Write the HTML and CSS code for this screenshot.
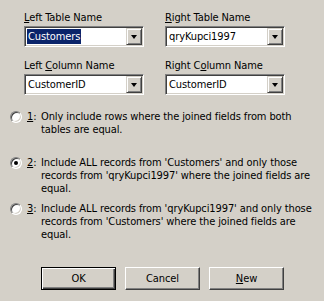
FILE: index.html
```html
<!DOCTYPE html>
<html>
<head>
<meta charset="utf-8">
<link rel="stylesheet" href="styles.css">
</head>
<body>
<div class="dialog">
  <div class="fields">
    <div class="field">
      <div class="label"><u>L</u>eft Table Name</div>
      <div class="combo"><div class="value"><span class="sel">Customers</span></div><div class="btn"><span class="arrow"></span></div></div>
    </div>
    <div class="field">
      <div class="label"><u>R</u>ight Table Name</div>
      <div class="combo"><div class="value">qryKupci1997</div><div class="btn"><span class="arrow"></span></div></div>
    </div>
    <div class="field">
      <div class="label">Left <u>C</u>olumn Name</div>
      <div class="combo"><div class="value">CustomerID</div><div class="btn"><span class="arrow"></span></div></div>
    </div>
    <div class="field">
      <div class="label">Right C<u>o</u>lumn Name</div>
      <div class="combo"><div class="value">CustomerID</div><div class="btn"><span class="arrow"></span></div></div>
    </div>
  </div>
  <div class="options">
    <div class="option">
      <span class="radio"></span>
      <span class="num"><u>1</u>:</span>
      <span class="text">Only include rows where the joined fields from both tables are equal.</span>
    </div>
    <div class="option">
      <span class="radio checked"></span>
      <span class="num"><u>2</u>:</span>
      <span class="text">Include ALL records from 'Customers' and only those records from 'qryKupci1997' where the joined fields are equal.</span>
    </div>
    <div class="option">
      <span class="radio"></span>
      <span class="num"><u>3</u>:</span>
      <span class="text">Include ALL records from 'qryKupci1997' and only those records from 'Customers' where the joined fields are equal.</span>
    </div>
  </div>
  <div class="buttons">
    <div class="button default"><span>OK</span></div>
    <div class="button"><span>Cancel</span></div>
    <div class="button"><span><u>N</u>ew</span></div>
  </div>
</div>
</body>
</html>
```
FILE: styles.css
```css
html, body {
  margin: 0;
  padding: 0;
  background: #d4d0c8;
}
body {
  width: 324px;
  height: 301px;
  overflow: hidden;
  font-family: "DejaVu Sans Condensed", "DejaVu Sans", sans-serif;
  font-size: 11px;
  letter-spacing: -0.1px;
  color: #000;
}
.dialog {
  padding-top: 11px;
}
.fields {
  display: grid;
  grid-template-columns: 120px 120px;
  column-gap: 21px;
  row-gap: 12px;
  padding-left: 24px;
}
.label {
  height: 13px;
  line-height: 13px;
  margin-bottom: 2px;
  white-space: nowrap;
}
.combo {
  box-sizing: border-box;
  height: 21px;
  display: flex;
  background: #fff;
  border: 1px solid;
  border-color: #808080 #fff #fff #808080;
  box-shadow: inset 1px 1px 0 #404040, inset -1px -1px 0 #d4d0c8;
  padding: 1px;
}
.value {
  flex: 1;
  padding-left: 2px;
  line-height: 17px;
  white-space: nowrap;
  overflow: hidden;
}
.sel {
  display: inline-block;
  background: #0a246a;
  color: #fff;
  margin-left: -1px;
  padding: 0 1px;
  line-height: 15px;
  margin-top: 1px;
  vertical-align: top;
}
.btn {
  box-sizing: border-box;
  width: 16px;
  height: 17px;
  background: #d4d0c8;
  border: 1px solid;
  border-color: #d4d0c8 #404040 #404040 #d4d0c8;
  box-shadow: inset 1px 1px 0 #fff, inset -1px -1px 0 #808080;
  display: flex;
  align-items: center;
  justify-content: center;
}
.arrow {
  width: 0;
  height: 0;
  border-left: 3.5px solid transparent;
  border-right: 3.5px solid transparent;
  border-top: 4px solid #000;
  margin-top: 1px;
}
.options {
  margin-top: 15px;
  padding-left: 10px;
  padding-right: 10px;
}
.option {
  display: flex;
  align-items: flex-start;
  line-height: 13px;
  height: 46px;
}
.radio {
  box-sizing: border-box;
  width: 12px;
  height: 12px;
  border-radius: 50%;
  border: 1px solid;
  border-color: #808080 #fff #fff #808080;
  box-shadow: inset 1px 1px 0 #404040, inset -1px -1px 0 #d4d0c8;
  background: #fff;
  flex: none;
  margin-top: 1px;
  display: flex;
  align-items: center;
  justify-content: center;
}
.radio.checked::after {
  content: "";
  width: 4px;
  height: 4px;
  border-radius: 50%;
  background: #000;
}
.num {
  flex: none;
  width: 14px;
  margin-left: 5px;
}
.text {
  flex: 1;
}
.buttons {
  display: flex;
  gap: 9px;
  padding-left: 41px;
  margin-top: 19px;
}
.button {
  box-sizing: border-box;
  width: 75px;
  height: 23px;
  background: #d4d0c8;
  border: 1px solid;
  border-color: #fff #404040 #404040 #fff;
  box-shadow: inset -1px -1px 0 #808080;
  display: flex;
  align-items: center;
  justify-content: center;
}
.button.default {
  border: 1px solid #000;
  box-shadow: inset 1px 1px 0 #fff, inset -1px -1px 0 #404040, inset -2px -2px 0 #808080;
}
```
